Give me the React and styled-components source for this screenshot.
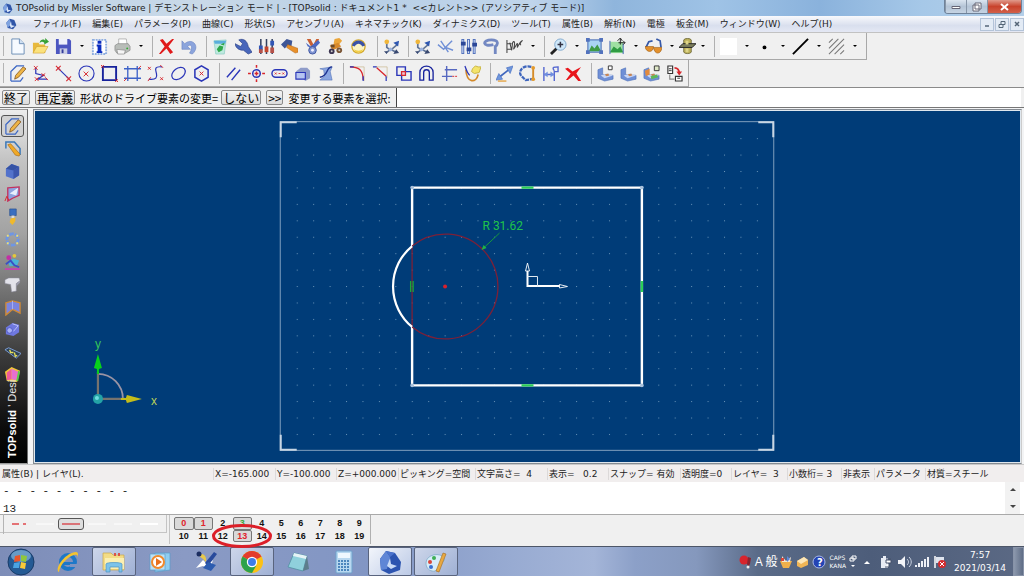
import React from "react";
import styled, { createGlobalStyle, css } from "styled-components";

const ui = '"DejaVu Sans", "Noto Sans CJK JP", sans-serif';
const jp = '"Noto Sans CJK JP", sans-serif';

const Global = createGlobalStyle`
  *, *::before, *::after { box-sizing: border-box; }
  body { margin: 0; background: #f0f0f0; color: #222; font: 9px/12px ${ui}; }
  button, input { font: inherit; color: inherit; margin: 0; padding: 0; border-radius: 0; }
  svg { display: block; }
`;

/* ---------- frame ---------- */
const Shell = styled.div`
  display: flex;
  flex-direction: column;
  height: 100vh;
  overflow: hidden;
`;

const TitleBar = styled.header`
  display: flex;
  flex: 0 0 16px;
  align-items: center;
  gap: 3px;
  padding-left: 2px;
  white-space: pre;
  background: linear-gradient(90deg, #bed3e8 0%, #c9d9e8 20%, #b8cfe6 35%, #c0d5eb 52%, #8fb5dc 60%, #9fc3e6 70%, #8ab2dc 80%, #a6c8e8 90%, #b4cfe9 100%);
`;
const TitleText = styled.h1`
  flex: 1;
  margin: 0;
  font: inherit;
`;
const WindowButtons = styled.div`
  display: flex;
  align-self: flex-start;
  height: 14px;
  margin-right: 2px;
  border: 1px solid #6f8299;
  border-top: 0;
  border-radius: 0 0 4px 4px;
  overflow: hidden;
`;
const WindowButton = styled.button`
  display: grid;
  place-items: center;
  width: ${(p) => (p.$close ? 34 : 21)}px;
  border: 0;
  border-left: 1px solid #8796a8;
  background: ${(p) =>
    p.$close
      ? "linear-gradient(#e09a8c, #c8422c 50%, #d2604a)"
      : "linear-gradient(#dbe5f0, #b4c4d6 50%, #c6d4e3)"};
`;

const MenuBar = styled.nav`
  display: flex;
  flex: 0 0 16px;
  align-items: center;
  gap: 11px;
  padding-left: 5px;
  background: linear-gradient(#f8f9fc, #d9dfee 60%, #e4e8f4);
`;
const MenuIcon = styled.span`
  width: 17px;
`;
const MenuItem = styled.button`
  border: 0;
  background: none;
  white-space: nowrap;
`;
const ChildButtons = styled.div`
  display: flex;
  gap: 1px;
  margin-left: auto;
`;
const ChildButton = styled.button`
  display: grid;
  place-items: center;
  width: 14px;
  height: 13px;
  border: 1px solid #b3c3d8;
  background: #e3ebf5;
`;

/* ---------- toolbars ---------- */
const Toolbar = styled.div`
  display: flex;
  align-items: center;
  height: 27px;
  padding: 0 ${(p) => p.$end}px 0 3px;
  border-right: 1px solid #a8a8a8;
  border-bottom: 1px solid #a8a8a8;
`;
const ToolbarLine = styled.div`
  display: flex;
  flex: none;
  border-top: ${(p) => (p.$rule ? "1px solid #c2c2c2" : "0")};
`;
const Grip = styled.span`
  width: 1px;
  height: 20px;
  margin-right: 2px;
  background: #b4b4b4;
`;
const Divider = styled.span`
  width: 1px;
  height: 21px;
  margin: 0 2px 0 ${(p) => p.$before}px;
  background: #b0b0b0;
`;
const Tool = styled.button`
  display: grid;
  place-items: center;
  width: ${(p) => p.$w || 23}px;
  height: 22px;
  border: 0;
  background: none;
`;
const Caret = styled.button`
  display: grid;
  place-items: center;
  width: 13px;
  height: 22px;
  border: 0;
  background: none;
  &::before {
    content: "";
    border: 2px solid transparent;
    border-top-color: #000;
    border-bottom: 0;
  }
`;

/* ---------- prompt ---------- */
const Prompt = styled.form`
  display: flex;
  flex: 0 0 21px;
  align-items: center;
  padding: 0 3px 0 2px;
  border-top: 1px solid #8a8a8a;
  border-bottom: 1px solid #777;
  font: 11px/14px ${jp};
  color: #000;
  white-space: nowrap;
`;
const PromptButton = styled.button`
  height: 15px;
  padding: 0 1px;
  margin-right: ${(p) => p.$after}px;
  border: 1px solid #8b8b8b;
  border-radius: 2px;
  background: linear-gradient(#f4f4f4, #dcdcdc);
  font-size: 12px;
  line-height: 12px;
`;
const PromptText = styled.span`
  margin-right: 3px;
`;
const PromptInput = styled.input`
  flex: 1;
  min-width: 0;
  height: 19px;
  margin-left: 5px;
  border: 0;
  border-left: 1px solid #444;
  background: #fff;
  outline: none;
`;

/* ---------- workspace ---------- */
const Workspace = styled.main`
  display: flex;
  flex: 1;
  min-height: 0;
  padding: 1px 2px 0 0;
  gap: 5px;
  background: #f3f4f5;
`;
const SideBar = styled.aside`
  display: flex;
  flex: 0 0 28px;
  flex-direction: column;
  border-right: 1px solid #6e6e6e;
  border-top: 1px solid #999;
  border-bottom: 1px solid #999;
  background: linear-gradient(#ececec 0%, #c4c4c4 14%, #a2a2a2 35%, #6e6e6e 53%, #3a3a3a 70%, #0c0c0c 90%, #000 100%);
`;
const SideTools = styled.div`
  display: flex;
  flex: 0 0 276px;
  flex-direction: column;
  justify-content: space-between;
  padding: 5px 3px 0 1px;
`;
const SideTool = styled.button`
  display: grid;
  place-items: center;
  height: 22px;
  border: 1px solid ${(p) => (p.$on ? "#555" : "transparent")};
  border-radius: 3px;
  background: ${(p) => (p.$on ? "#d2d2d2" : "none")};
`;
const Brand = styled.div`
  flex: 1;
  min-height: 0;
  padding-top: 5px;
  margin-left: 4px;
  writing-mode: vertical-rl;
  transform: rotate(180deg);
  white-space: nowrap;
  font: 11px/16px "Liberation Sans", sans-serif;
  color: #e8e8e8;
  b { color: #fff; }
`;
const Viewport = styled.section`
  flex: 1;
  min-width: 0;
  padding: 1px;
  border: 1px solid #858b92;
  border-right-color: #ccc;
  background: #dfe7ee;
  svg { width: 100%; height: 100%; background: #003c78; }
`;

/* ---------- status and console ---------- */
const StatusBar = styled.footer`
  display: grid;
  flex: 0 0 18px;
  grid-template-columns: 213fr 62fr 61fr 62fr 77fr 72fr 61fr 72fr 51fr 56fr 54fr 33fr 51fr 99fr;
  align-items: center;
  border-top: 1px solid #c9c9c9;
  background: #f1eeee;
  white-space: pre;
`;
const StatusCell = styled.span`
  min-width: 0;
  padding-left: 1px;
  border-left: 1px solid ${(p) => (p.$first ? "transparent" : "#dcd9d9")};
`;
const Console = styled.section`
  display: flex;
  flex: 0 0 33px;
  min-height: 0;
  overflow: hidden;
  padding-left: 1px;
  border-bottom: 1px solid #a9a9a9;
  background: #fff;
`;
const ConsoleText = styled.pre`
  flex: 1;
  margin: 0;
  padding-left: 2px;
  overflow: hidden;
  font: 11px/18px "Liberation Mono", monospace;
`;
const ScrollBar = styled.div`
  display: flex;
  flex-direction: column;
  justify-content: space-between;
  width: 15px;
  height: 32px;
  margin-right: 4px;
  background: #f2f2f2;
`;
const ScrollButton = styled.button`
  display: grid;
  place-items: center;
  height: 15px;
  border: 0;
  background: none;
  &::before {
    content: "";
    border: 3px solid transparent;
    ${(p) =>
      p.$up
        ? css`border-bottom-color: #444; border-top: 0;`
        : css`border-top-color: #444; border-bottom: 0;`}
  }
`;

/* ---------- line styles and layers ---------- */
const BottomBars = styled.div`
  display: flex;
  flex: 0 0 31px;
  align-items: flex-start;
`;
const LineStyles = styled.div`
  display: flex;
  flex: 0 0 167px;
  align-items: center;
  height: 18px;
  padding-left: 3px;
  border-right: 1px solid #c4c4c4;
  border-bottom: 1px solid #c4c4c4;
`;
const LineStyle = styled.button`
  display: grid;
  place-items: center;
  width: 26px;
  height: 12px;
  border: 1px solid ${(p) => (p.$on ? "#555" : "transparent")};
  border-radius: 3px;
  background: ${(p) => (p.$on ? "#dedede" : "none")};
`;
const Layers = styled.div`
  position: relative;
  display: grid;
  grid-template-columns: repeat(10, 1fr);
  flex: 0 0 202px;
  height: 29px;
  padding: 2px 1px 2px 4px;
  margin-left: 2px;
  border-left: 1px solid #c4c4c4;
  border-right: 1px solid #b0b0b0;
`;
const Layer = styled.button`
  border: 1px solid ${(p) => (p.$on ? "#777" : "transparent")};
  border-radius: 2px;
  background: ${(p) => (p.$on ? "#d9d9d9" : "none")};
  color: ${(p) => p.$color || "#111"};
  font: bold 9px/10px "Liberation Sans", sans-serif;
`;
const Marker = styled.svg`
  position: absolute;
  left: 41px;
  top: 9px;
  z-index: 1;
  pointer-events: none;
`;

/* ---------- taskbar ---------- */
const Taskbar = styled.footer`
  display: flex;
  flex: 0 0 30px;
  align-items: center;
  border-top: 1px solid #4d5668;
  background: linear-gradient(90deg, #7d8db8 0%, #8a9ac4 18%, #8296c4 36%, #98abd2 50%, #a4b5d8 58%, #8ca0c8 62%, #8598bd 68%, #5a6b88 74%, #4d5d7a 85%, #5b6984 100%);
  color: #fff;
`;
const StartButton = styled.button`
  display: grid;
  place-items: center;
  width: 41px;
  margin-right: 5px;
  border: 0;
  background: none;
`;
const Pinned = styled.div`
  display: flex;
  gap: 2px;
`;
const Task = styled.button`
  display: grid;
  place-items: center;
  width: 44px;
  height: 29px;
  border: 1px solid ${(p) => (p.$open ? "#59647e" : "transparent")};
  border-radius: 2px;
  background: ${(p) =>
    p.$active
      ? "linear-gradient(135deg, #f2f5fb, #bccae6)"
      : p.$open
      ? "linear-gradient(135deg, #cdd6ea, #9fb0d4)"
      : "none"};
`;
const Tray = styled.div`
  display: flex;
  align-items: center;
  gap: 3px;
  margin-left: auto;
`;
const ImeText = styled.span`
  margin-right: -1px;
  font: 12px/14px "Liberation Sans", ${jp};
  white-space: nowrap;
`;
const Keys = styled.span`
  font: 6px/8px ${ui};
`;
const Clock = styled.time`
  width: 60px;
  text-align: center;
  line-height: 13px;
`;
const ShowDesktop = styled.button`
  width: 11px;
  height: 29px;
  border: 1px solid #8893a8;
  background: linear-gradient(90deg, #8c98ad, #5f6d86);
`;

/* ---------- icons, each on an 18 x 18 field ---------- */
const B = "#2a35b8";
const R = "#d8262c";
const O = "#e39a2d";
const S = "#6f8fd6";

const art = {
  app: <><path d="M2 7 7 1l7 2 3 8-5 6-8-2z" fill="#2f55a8" /><path d="M2 7 7 1l2 8-5 6z" fill="#7ea2e0" /><path d="m9 5 1 6 5 1-6 3-2-4z" fill="#dbe8fb" /></>,
  page: <><path d="M3 1h8l5 5v11H3z" fill="#f6faff" stroke="#6b8db5" /><path d="M11 1v5h5" fill="#cfe0f3" stroke="#6b8db5" /></>,
  open: <><path d="M1 5h6l1 2h6v9H1z" fill="#e8b93c" /><path d="m1 16 4-7h12l-4 7z" fill="#fbe27c" stroke="#cf9c2a" strokeWidth=".6" /><path d="M8 5c1-4 5-4 6-2V0l4 4-5 3V5c-2-2-3-1-5 0z" fill="#37a036" /></>,
  save: <><path d="M1 1h14l2 2v14H1z" fill="#4c56c0" /><path d="M4 1h9v6H4z" fill="#eef1fb" /><path d="M5 11h8v6H5z" fill="#c9cde4" /><path d="M7 12h2v4H7z" fill="#333c9a" /></>,
  info: <><path d="M2 2h14v15H2z" fill="#fff" stroke="#8faee0" strokeWidth="2" strokeDasharray="2 1" /><path d="M7 3h4v3H7zM6 7h5v7h1v2H6v-2h1V9H6z" fill="#0b2cc0" /></>,
  print: <><path d="M5 1h8l1 7H5z" fill="#fff" stroke="#999" strokeWidth=".7" /><path d="m1 8 3-2h11l2 3v4l-5 3H3l-2-3z" fill="#b9bdb9" stroke="#777" strokeWidth=".6" /><path d="m3 12 9 1-1 4H4z" fill="#f4f4f4" stroke="#777" strokeWidth=".6" /><circle cx="14" cy="11" r="1" fill="#3a3" /></>,
  del: <path d="m2 2 3-1 4 5 6-5h2l-6 8 5 6-3 2-4-6-6 6H1l6-8z" fill="#e0191a" />,
  undo: <path d="M1 3v9h9L7 9c4-4 6 1 2 7l3 1C21 9 12-1 4 6z" fill="#8ba4dc" stroke="#6580c0" strokeWidth=".6" />,
  recycle: <><path d="m2 3 13-1-2 15H4z" fill="#bfeadf" stroke="#7dc4bc" strokeWidth=".6" /><path d="M2 3h13l-1 3H3z" fill="#5aaedc" /><path d="m5 12 3-4 4 1-1 4-4 2zM9 7l4-2v3z" fill="#2fa84a" /></>,
  wrench: <path d="M0 6c1 6 6 7 9 7l5 4 4-2-4-6C13 3 9 0 4 2l4 4-2 3z" fill="#4866bb" stroke="#2b3f85" strokeWidth=".7" />,
  sliders: <><path d="M3 1v16M9 1v16M15 1v16" stroke="#33405f" strokeWidth="1.6" /><path d="M1 8h4v5H1zM13 3h4v5h-4z" fill="#3156b5" /><path d="M7 9h4v6H7z" fill="#c2452d" /><path d="M1 12h4v4H1zM13 10h4v6h-4z" fill="#b5524a" /></>,
  hammer: <><path d="m0 7 6-6 6 2-1 6-4-1-3 3z" fill="#3f5696" /><path d="m7 7 11 4v4l-3 1-9-6z" fill="#e8902a" stroke="#a95f15" strokeWidth=".5" /></>,
  medal: <><path d="m3 1 4 0 3 6 3-6h3l-4 9H8z" fill="#c96033" /><path d="m2 5 5 4 8-7 2 3-6 6-7-2z" fill="#4a68c4" /><circle cx="9" cy="13" r="4" fill="#8095d2" stroke="#3e54a0" /><circle cx="9" cy="13" r="1.5" fill="#eef" /></>,
  robot: <><path d="m8 1 5-1 3 3-4 5-5-2z" fill="#eba53a" /><path d="m3 8 9-3 3 4-9 4z" fill="#d8892b" /><path d="M4 7h4v3H4z" fill="#6a4a2a" /><circle cx="5" cy="14" r="3" fill="#3b3450" /><circle cx="13" cy="13" r="3" fill="#7a5535" /><circle cx="5" cy="14" r="1" fill="#ccc" /><circle cx="13" cy="13" r="1" fill="#ccc" /></>,
  gauge: <><circle cx="9" cy="9" r="7" fill="#fbf3c4" stroke="#d2a82c" strokeWidth="1.4" /><path d="M2 8c2-7 12-7 14 0l-3 1c-2-4-6-4-8 0z" fill="#3a52a8" /><path d="M4 12c3 2 7 2 10 0l-2 3H6z" fill="#f3cf48" /></>,
  axes: <><path d="M4 3v7l4 3 7-6M8 12l-5 4M8 12l6 3" fill="none" stroke="#5f7396" strokeWidth="1.8" /><circle cx="4" cy="4" r="2.5" fill="#f0b63a" /><path d="m17 3-1 6-5-4z" fill="#2e57b0" /><circle cx="8" cy="12" r="2" fill="#9cb2dd" /><path d="m1 14 4 0-1 3zM14 12l3 4-6 1z" fill="#384870" /></>,
  check: <path d="M1 7 7 12 16 3M4 3l8 12M9 10l8 3" fill="none" stroke="#6f8fd6" strokeWidth="1.5" />,
  bars: <><path d="M3 1v16M9 1v16M15 1v16" stroke="#4c6cba" strokeWidth="3" /><path d="M3 2v14M9 2v14M15 2v14" stroke="#dbe5fa" /><path d="M1 4h5v4H1zM7 10h5v4H7zM13 5h5v4h-5z" fill="#2b4797" /></>,
  loop: <path d="M11 7c-12 3-12-5-2-5 8 0 7 5 4 7v8" fill="none" stroke="#7388c2" strokeWidth="3" />,
  scribble: <path d="M1 2v14M1 6h5M1 12h5M4 5l2 8 1-8c2-3 3 0 1 7 5-8 4-8 4-2 3-6 4-7 5-7-2 2-3 5-1 4" fill="none" stroke="#444" strokeWidth="1.1" />,
  zoom: <><path d="m1 17 6-6" stroke="#222" strokeWidth="3" /><circle cx="11" cy="7" r="6" fill="#cfe8fa" stroke="#7ea7cc" /><path d="M8 7h6M11 4v6" stroke="#334" strokeWidth="1.6" /></>,
  fit: <><path d="M2 2h14v13H2z" fill="#a9d4f3" stroke="#3b62b0" /><path d="m3 14 3-6 3 3 3-4 4 7z" fill="#3f9b45" /><path d="M0 0h4v4H0zM14 0h4v4h-4zM0 13h4v4H0zM14 13h4v4h-4z" fill="#5272bd" /></>,
  view: <><path d="M1 4h14v12H1z" fill="#9fe0a2" /><path d="m1 15 4-6 4 3 3-3 3 6z" fill="#2f9b42" /><path d="M1 3v14M15 6v11" stroke="#3b62b0" /><path d="M9 3 12 0l2 3M12 1v6M10 5h7l-2-2m2 2-2 2" fill="none" stroke="#222" /></>,
  glasses: <><path d="M1 10 4 4l4-1M12 1l4 2 1 7" fill="none" stroke="#3558a8" strokeWidth="1.8" /><path d="M0 9h9c0 7-8 7-9 0zM9 10h9c-1 8-8 8-9 0z" fill="#e3902c" stroke="#9a5b12" strokeWidth=".6" /></>,
  section: <><path d="M5 2c1-2 7-2 8 0v13c-1 2-7 2-8 0z" fill="#bdb15a" stroke="#5f5a2c" strokeWidth=".8" /><path d="m0 10 4-4h14l-4 4z" fill="#7b7d5c" stroke="#222" /><path d="M7 3h3v4H7zM7 11h3v4H7z" fill="#ded589" /></>,
  white: <path d="M0 0h18v18H0z" fill="#fff" />,
  dot: <circle cx="9" cy="10" r="2" fill="#000" />,
  line: <path d="M1 17 17 1" stroke="#000" strokeWidth="2" />,
  hatch: <path d="m1 5 4-4M1 11 11 1M1 17 17 1M7 17 17 7M13 17l4-4" stroke="#777" strokeWidth="1.1" />,

  sketch: <><path d="M2 17V7l6-6h8M2 17h10l3-4" fill="none" stroke="#3d67c4" strokeWidth="1.3" /><path d="m6 15 1-4 8-9 3 2-8 9z" fill="#efb545" stroke="#7a4c17" strokeWidth=".8" /></>,
  polyline: <><path d="M4 3v6l8 2-6 4h10" fill="none" stroke={B} strokeWidth="1.3" /><path d="m2 1 4 4m0-4L2 5M10 9l4 3m0-3-4 3M3 13l4 4m0-4-4 4M14 13l3 3" stroke={R} /></>,
  segment: <><path d="m3 3 12 12" stroke={B} strokeWidth="1.2" /><path d="m1 1 5 5m0-5L1 6M12 12l5 5m0-5-5 5" fill="none" stroke={R} strokeWidth="1.1" /></>,
  circle: <><circle cx="9" cy="9" r="8" fill="none" stroke={B} strokeWidth="1.2" /><path d="m6 7 5 5m0-5-5 5" stroke={R} /></>,
  rect: <><path d="M2 2h14v14H2z" fill="none" stroke="#17229c" strokeWidth="2" /><path d="m0 0 3 3m0-3L0 3M15 15l3 3m0-3-3 3" stroke={R} /></>,
  frame: <><path d="M4 1v16M14 1v16M0 4h18M0 14h18" stroke="#3d62c8" strokeWidth="1.4" /><path d="m0 17 3-3M15 4l3-3" stroke={R} /></>,
  spline: <><path d="M16 2C7 1 9 5 10 9s0 7-8 6" fill="none" stroke={B} strokeWidth="1.3" /><path d="m1 2 3 3m0-3L1 5M14 0l3 3M4 13l-3 4M14 13l3 3m0-3-3 3" stroke={R} /></>,
  ellipse: <ellipse cx="9" cy="9" rx="8" ry="5.5" fill="none" stroke={B} strokeWidth="1.3" transform="rotate(-38 9 9)" />,
  hexagon: <><path d="m9 1 7 4v8l-7 4-7-4V5z" fill="none" stroke={B} strokeWidth="1.6" /><path d="m7 7 4 4m0-4-4 4" stroke={R} /></>,
  parallel: <path d="m2 13 9-10M7 16 16 5" stroke={B} strokeWidth="1.5" />,
  target: <><circle cx="9" cy="9" r="4" fill="none" stroke={B} strokeWidth="1.6" /><path d="M9 0v3M9 15v3M0 9h3M15 9h3M9 7v4M7 9h4" stroke={R} strokeWidth="1.6" /></>,
  slot: <><rect x="1" y="5" width="16" height="8" rx="4" fill="none" stroke={B} strokeWidth="1.5" /><path d="m4 8 2 2m0-2-2 2M12 8l2 2m0-2-2 2M8 9h2" stroke={R} strokeWidth=".9" /></>,
  face: <><path d="m2 7 5-4h7l3 3v8l-5 3" fill="#8f9cc9" /><path d="M2 8h10v7H2z" fill="#b5c4f2" stroke={B} strokeWidth="1.2" /></>,
  wave: <><path d="m3 4 13-2-2 5 2 9H3l5-4-1-7z" fill="#8aa6e2" stroke="#5270b5" strokeWidth=".6" /><path d="M16 2c-7 0-3 9-13 11" fill="none" stroke="#1d3290" strokeWidth="1.5" /></>,
  fillet: <><path d="M1 2h15v15" fill="none" stroke="#c9b48a" strokeWidth=".7" /><path d="M1 2c9 0 14 3 14 14" fill="none" stroke={R} strokeWidth="1.4" /><path d="M1 2h4M15 12v5" stroke={B} strokeWidth="1.3" /></>,
  chamfer: <><path d="M4 2h12v12" fill="none" stroke="#c9b48a" strokeWidth=".7" /><path d="m5 3 10 9" stroke={R} strokeWidth="1.4" /><path d="M1 2h4M15 12v5" stroke={B} strokeWidth="1.3" /></>,
  boolean: <><path d="M2 2h9v9H2zM7 7h10v9H7z" fill="none" stroke={B} strokeWidth="1.5" /><path d="M7 7h4v4H7z" fill="#f3c4ce" stroke={R} strokeWidth="1.2" /></>,
  offset: <path d="M2 16V8c0-9 14-9 14 0v8h-4V8c0-4-6-4-6 0v8z" fill="none" stroke="#17229c" strokeWidth="1.4" />,
  trim: <><path d="M6 1v16M4 5h13M1 12h11" stroke="#5668c0" strokeWidth="1.5" /><path d="M12 12h6" stroke={R} strokeDasharray="2 1" /></>,
  tangent: <><path d="M2 5c1 15 11 14 13 5" fill="none" stroke="#d48a2a" strokeWidth="1.8" /><path d="M1 1c1 3 2 7 5 10" fill="none" stroke={B} strokeWidth="1.3" /><path d="m9 4 3-3 3 1h3l-2 6-5 1-3-2z" fill="#f4e46c" stroke="#c8b440" strokeWidth="1" /></>,
  measure: <><path d="M2 14 16 3" stroke="#3f66bd" strokeWidth="1.8" /><path d="m0 16 3-7 4 6zM18 1l-7 2 4 6z" fill="#6f97dc" stroke="#3f66bd" strokeWidth=".6" /><path d="M2 17h9" stroke={O} strokeWidth="1.3" /></>,
  constraint: <><path d="M13 2C4-1-3 8 4 13l3 3 7-1" fill="none" stroke="#3f66bd" strokeWidth="2.4" strokeDasharray="4 1" /><path d="M15 3v12" stroke="#d48a2a" strokeWidth="2" /><circle cx="15" cy="3" r="2" fill={O} /><circle cx="15" cy="15" r="2" fill={O} /></>,
  dimension: <><path d="M2 2v15M13 6v11M2 10h11M13 6c-3-4 0-4 4-4v5h-4" fill="none" stroke="#5668d0" strokeWidth="1.5" /><path d="m2 10 4-3v6zM13 10 9 7v6z" fill="#6f8fe0" /></>,
  erase: <path d="m0 4 3-1 5 4 9-5-5 7 5 8-3 0-5-6-6 5H1l5-7z" fill="#e8151b" />,
  block: <><path d="m1 5 5-2v7l11 1v4l-9 2-7-3z" fill={S} stroke="#4b6db6" strokeWidth=".6" /><path d="m4 11 6-2 7 2-9 3z" fill="#c7d5f4" /><path d="m8 10 4-1 1 2-3 1z" fill="#c58453" /></>,
  dirs: <><path d="M2 1h5v8H2zM10 12h7v5h-7z" fill="#fff" stroke="#333" strokeWidth="1.2" /><path d="M3 4h3M3 6h3M12 14h3" stroke="#333" /><path d="M9 3c4 0 5 2 5 6" fill="none" stroke={R} strokeWidth="1.8" /><path d="m11 7 6 0-3 4z" fill={R} /><path d="M4 10v5h5" fill="none" stroke="#888" strokeWidth="1.2" /></>,

  sideEdit: <><path d="M2 9V2h9l6 7v7" fill="none" stroke="#3b78b8" strokeWidth="1.6" /><path d="m4 5 3-1 10 11-1 2-4-1z" fill="#f0a927" stroke="#a96a12" strokeWidth=".7" /></>,
  box: <><path d="m2 6 6-5 8 3v9l-6 4-8-3z" fill="#5372cb" /><path d="m2 6 6-5 8 3-6 4z" fill="#3553a5" /><path d="m10 8 6-4v9l-6 4z" fill="#3c56ad" /></>,
  solid: <><path d="m4 3 12-1v9l-7 3-5 3z" fill="#8da3df" stroke="#c4305e" strokeWidth="1.4" /><path d="m6 9 9-6-2 8z" fill="#e8eefc" /><path d="m1 17 2-5 2 4" fill="none" stroke={R} /></>,
  screw: <><path d="M6 1h7v7H6z" fill="#3a6fc0" stroke="#244a8a" strokeWidth=".6" /><path d="M8 8h3v3H8z" fill="#ddd" /><path d="m7 11 5-1v4l-3 4-3-3z" fill="#f0b92c" /></>,
  ring: <><circle cx="9" cy="9" r="6" fill="none" stroke="#6f96e4" strokeWidth="3" strokeDasharray="5 1" /><path d="M3 5h2M13 5h2M3 13h2M13 13h2" stroke="#f0e070" strokeWidth="2" /></>,
  parts: <><circle cx="5" cy="5" r="2.5" fill="#c42fa5" /><circle cx="11" cy="3" r="2" fill="#e6c739" /><path d="m4 9 6-3 6 2-2 5-8 1z" fill="#4bb4d8" /><path d="m2 12 5-4 4 5 5 2" stroke="#3c4fc4" strokeWidth="2" fill="none" /><path d="M1 17h16" stroke="#d338b8" strokeWidth="1.6" /></>,
  machine: <><path d="m1 4 4-2h11l1 3-4 3v8l-5 1-1-8-6-1z" fill="#e3e3ea" stroke="#8b8b98" strokeWidth=".6" /><path d="m13 8 4-3v2l-4 4z" fill="#9a9aaa" /></>,
  fold: <><path d="m2 4 7-2 8 2v11l-8-4-7 6z" fill="#7a84e0" stroke="#d08a34" strokeWidth="1.4" /><path d="M9 2v9" stroke="#aab0f2" /></>,
  pipe: <><path d="m2 7 7-5 7 2v8l-6 4-8-2z" fill="#6f78e0" /><circle cx="6" cy="10" r="3" fill="#a9b1f6" stroke="#4d57c4" /><path d="m9 3 6 2-5 6" fill="none" stroke="#bcc3fb" /></>,
  plate: <><path d="m1 6 4-2 13 6-5 5z" fill="#2f4255" stroke="#7fa2dc" /><path d="m6 6 1 3 3 0M11 9l1 4 2-1" fill="none" stroke="#e7df5a" strokeWidth="1.4" /></>,
  color: <><path d="m1 6 7-5 9 4-3 12-11-1z" fill="#f0c53a" /><path d="m3 7 5-4v11l-5 1z" fill="#ef5a9a" /><path d="m8 3 7 3-2 9-5-1z" fill="#e86fd0" /><path d="m15 5 2 1-2 10-2 0z" fill="#5ac84e" /></>,
};

const Glyph = ({ name, size = 18, extra }) => (
  <svg width={size} height={size} viewBox="0 0 18 18" aria-hidden="true">
    {art[name]}
    {extra}
  </svg>
);

/* Each entry: "|n" is a divider, "v" a drop-down arrow, else an icon. */
const topTools = [
  ["page", "新規"], ["open", "開く"], ["save", "保存"], ["v", "保存の種類"], ["info", "情報"], ["print", "印刷"], ["v", "印刷の種類"], ["|5"],
  ["del", "削除"], ["undo", "元に戻す"], ["|5"],
  ["recycle", "ごみ箱"], ["wrench", "修正"], ["sliders", "パラメータ"], ["hammer", "ツール"], ["medal", "拘束"], ["robot", "移動"], ["gauge", "解析"], ["|7"],
  ["axes", "座標系"], ["|5"],
  ["axes", "カレント座標系"], ["check", "点"], ["bars", "属性"], ["loop", "回転"], ["scribble", "注記"], ["v", "注記の種類"], ["|5"],
  ["zoom", "ズーム"], ["v", "ズームの種類"], ["fit", "全体表示"], ["view", "ビュー"], ["v", "ビューの種類"], ["glasses", "表示"], ["v", "表示の種類"], ["section", "断面", 18], ["v", "断面の種類"], ["|5"],
  ["white", "色"], ["v", "色の選択"], ["dot", "点の種類"], ["v", "点の選択"], ["line", "線の種類"], ["v", "線の選択"], ["hatch", "ハッチング"], ["v", "ハッチングの選択"],
];
const sketchTools = [
  ["sketch", "スケッチ"], ["polyline", "輪郭"], ["segment", "直線"], ["circle", "円"], ["rect", "四角形"], ["frame", "枠"], ["spline", "スプライン"], ["ellipse", "楕円"], ["hexagon", "多角形"], ["|6"],
  ["parallel", "平行線"], ["target", "中心"], ["slot", "長穴"], ["face", "面"], ["wave", "投影"], ["|6"],
  ["fillet", "フィレット"], ["chamfer", "面取り"], ["boolean", "ブーリアン"], ["offset", "オフセット"], ["trim", "トリム"], ["tangent", "接線"], ["|6"],
  ["measure", "寸法"], ["constraint", "拘束"], ["dimension", "寸法線"], ["erase", "削除"], ["|6"],
  ["block", "ブロック", 23, <path key="a" d="M12 1h4v4h-4z" fill="#fff" stroke="#333" />],
  ["block", "ブロック挿入"],
  ["block", "ブロック編集", 23, <g key="b"><path d="m2 6 5-2v6l-4 2z" fill="#e28a3c" /><path d="m8 12 7-2 1 3-7 2z" fill="#5cb85a" /><path d="M12 1h5v5h-5z" fill="#dfe8c8" stroke="#333" /></g>],
  ["dirs", "置換"],
];
const ToolItems = ({ items }) =>
  items.map(([name, label, w, extra], i) =>
    name[0] === "|" ? (
      <Divider key={i} $before={Number(name[1])} />
    ) : name === "v" ? (
      <Caret key={i} type="button" aria-label={label} />
    ) : (
      <Tool key={i} type="button" $w={w} aria-label={label}>
        <Glyph name={name} size={17} extra={extra} />
      </Tool>
    )
  );

const menus = ["ファイル(F)", "編集(E)", "パラメータ(P)", "曲線(C)", "形状(S)", "アセンブリ(A)", "キネマチック(K)", "ダイナミクス(D)", "ツール(T)", "属性(B)", "解析(N)", "電極", "板金(M)", "ウィンドウ(W)", "ヘルプ(H)"];
const sideTools = [["sketch", "スケッチ"], ["sideEdit", "曲線"], ["box", "形状"], ["solid", "サーフェス"], ["screw", "標準部品"], ["ring", "アセンブリ"], ["parts", "部品"], ["machine", "工具"], ["fold", "板金"], ["pipe", "配管"], ["plate", "プレート"], ["color", "レンダリング"]];
const status = ["属性(B) | レイヤ(L).", "X=-165.000", "Y=-100.000", "Z=+000.000", "ピッキング=空間", "文字高さ=  4", "表示=   0.2", "スナップ= 有効", "透明度=0", "レイヤ=  3", "小数桁= 3", "非表示", "パラメータ", "材質=スチール"];
const layerColors = { 0: "#e0242c", 1: "#e0242c", 3: "#3fa63f", 13: "#e0242c" };

const Drawing = () => (
  <svg viewBox="35 111 986 351" role="img" aria-label="図面">
    <defs>
      <pattern id="grid" x="297" y="138" width="16.45" height="16.45" patternUnits="userSpaceOnUse">
        <rect width="1" height="1" fill="#6a94b8" />
      </pattern>
    </defs>
    <rect x="296" y="137" width="464" height="299" fill="url(#grid)" />
    <rect x="280.5" y="121.5" width="494" height="329" fill="none" stroke="#7f9fbe" />
    <path d="M281 137v-15h16M759 122h15v15M774 435v15h-15M297 450h-16v-15" fill="none" stroke="#c8d6e4" strokeWidth="2" />
    <path d="M412.500 246V187.500h230v198h-230V327" fill="none" stroke="#fff" strokeWidth="2.4" />
    <path d="M412.500 246v81" stroke="#7c2038" strokeWidth="1.3" />
    <path d="M412.500 246a52.500 52.500 0 1 1 0 81" fill="none" stroke="#7c2038" strokeWidth="1.3" />
    <path d="M412.500 246a52.500 52.500 0 0 0 0 81" fill="none" stroke="#fff" strokeWidth="2.2" />
    <circle cx="445.5" cy="286.5" r="2" fill="#d8202c" />
    <path d="M411 281v11M413.500 281v11" stroke="#17a83c" strokeWidth="1.3" />
    <path d="M522 187.500h12M522 385.500h12M642.500 281v11" stroke="#2bcf57" strokeWidth="2.4" />
    <g fill="#a9c1dc">
      <circle cx="412.5" cy="187.5" r="1.8" /><circle cx="642.5" cy="187.5" r="1.8" />
      <circle cx="412.5" cy="385.5" r="1.8" /><circle cx="642.5" cy="385.5" r="1.8" />
    </g>
    <path d="M528 270v16h33" fill="none" stroke="#fff" strokeWidth="2" />
    <path d="M528 276.500h10v10" fill="none" stroke="#dfe8f0" />
    <path d="m526 271 2-8 2 8zM560 284.500l8 2-8 1.500z" fill="#003c78" stroke="#fff" strokeWidth=".9" />
    <text x="483" y="230" fill="#1fc44a" fontFamily="Roboto, sans-serif" fontSize="12">R 31.62</text>
    <path d="m484 248 16-15" fill="none" stroke="#159a3c" />
    <path d="m482 250 2-5 3 3z" fill="#1fb447" />
    <path d="M98 374a25 25 0 0 1 25 25" fill="none" stroke="#9a94a4" strokeWidth="1.8" />
    <path d="M98 399v-27M98 399h27" stroke="#77736e" strokeWidth="2.2" />
    <path d="m94 368 4-14 4 14-3 1v5h-2v-5z" fill="#08d21c" />
    <path d="m127 395 15 4-15 4-1-3h-5v-2h5z" fill="#c4bd1a" />
    <circle cx="98" cy="399" r="5" fill="#24a3a6" /><circle cx="97" cy="398" r="2" fill="#6fdde0" />
    <text x="95" y="348" fill="#36c25a" fontFamily="Liberation Sans, sans-serif" fontSize="12">y</text>
    <text x="151" y="405" fill="#b9d05a" fontFamily="Liberation Sans, sans-serif" fontSize="12">x</text>
  </svg>
);

const taskArt = {
  ie: <><circle cx="12" cy="12" r="7" fill="none" stroke="#1e78c8" strokeWidth="4" /><path d="M6 12h13v3H6z" fill="#1e78c8" /><path d="M14 14h7v3h-7z" fill="#8094c0" /><path d="M3 22C-2 20 8 3 20 2c3 0 2 4 1 6 1-3 0-4-3-3C11 7 4 15 3 22z" fill="#f4c430" /></>,
  folder: <><path d="M1 3h8l2 2h11v15H1z" fill="#f3dc86" stroke="#c9a74a" strokeWidth=".7" /><path d="M3 8h19v11H3z" fill="#fbefb2" /><path d="M4 22v-8c0-2 16-2 16 0v8h-3v-5H8v5z" fill="#7cc3ea" stroke="#4c93c4" strokeWidth=".7" /><path d="M12 3h2v3h-2zM16 3h2v3h-2z" fill="#d9534a" /></>,
  media: <><path d="M7 3h15v17l-15 2z" fill="#8fcdf0" stroke="#5a9bc8" strokeWidth=".7" /><path d="M2 4h15v16H2z" fill="#b9e0f6" stroke="#5a9bc8" strokeWidth=".7" /><circle cx="10" cy="12" r="7" fill="#f08a2c" /><circle cx="10" cy="12" r="5" fill="#fff" /><path d="m8 8 6 4-6 4z" fill="#e8701c" /></>,
  swan: <><path d="m2 18 7-8 4 4 6-4-3 9-7-3z" fill="#fff" /><path d="M4 5c6-3 9 2 8 7L9 9z" fill="#e8c94a" /><path d="m11 13 9-11 3 2-9 12z" fill="#284a9c" /><path d="m14 12 8 3-5 6-8-3z" fill="#2c5cb0" /><circle cx="5" cy="4" r="2.5" fill="#1b2d60" /></>,
  chrome: <><circle cx="12" cy="12" r="11" fill="#fbc116" /><path d="M12 12 2.500 6.500a11 11 0 0 1 19 0z" fill="#e33b2e" /><path d="M12 12 2.500 6.500A11 11 0 0 0 12 23l4-7z" fill="#2ba24c" /><circle cx="12" cy="12" r="5.2" fill="#fff" /><circle cx="12" cy="12" r="4" fill="#3f7de8" /></>,
  note: <><path d="m8 3 13 3-4 15-15-4z" fill="#8fd0dc" stroke="#4a8d9c" strokeWidth=".7" /><path d="m8 3 13 3-1 3L7 6z" fill="#e6f3f6" /><path d="m21 6 2 13-6 2z" fill="#5d7d8c" /></>,
  calc: <><rect x="4" y="1" width="16" height="22" rx="1" fill="#b8d8f0" stroke="#6ea2cc" /><path d="M6 3h12v5H6z" fill="#eef8ff" /><path d="M6 11h12M6 14h12M6 17h12M6 20h12" stroke="#4c86bd" strokeWidth="2" strokeDasharray="2 1" /></>,
  top: <><path d="M2 9 8 1l9 2 6 9-1 8-11 4-8-4z" fill="#2c54b0" /><path d="m2 9 6-8 4 6-3 12-6 1z" fill="#5f86d6" /><path d="m12 8 1 6 6 2-6 3-4-3z" fill="#c9daf6" /><path d="m8 1 9 2-5 4z" fill="#4a72cc" /></>,
  paint: <><path d="M2 13C2 4 17 2 20 8c2 5-4 3-5 7s-3 7-7 6-6-4-6-8z" fill="#d7ecf8" stroke="#7fa9c8" strokeWidth=".8" /><circle cx="6" cy="12" r="2" fill="#d9453a" /><circle cx="10" cy="8" r="2" fill="#3fae55" /><circle cx="7" cy="17" r="2" fill="#3a6fd0" /><path d="m12 21 7-18 3 1-7 18z" fill="#e8a842" stroke="#a36c1e" strokeWidth=".6" /></>,
};
const TaskIcon = ({ name }) => (
  <svg width="24" height="24" viewBox="0 0 24 24" aria-hidden="true">{taskArt[name]}</svg>
);
const tasks = [["ie", "Internet Explorer"], ["folder", "エクスプローラー", true], ["media", "Media Player"], ["swan", "メール"], ["chrome", "Chrome", true], ["note", "メモ帳"], ["calc", "電卓"], ["top", "TOPsolid", true, true], ["paint", "ペイント", true]];

export default function App() {
  return (
    <Shell>
      <Global />
      <TitleBar>
        <Glyph name="app" size={11} />
        <TitleText>{"TOPsolid by Missler Software | デモンストレーション モード | - [TOPsolid : ドキュメント1 *  <<カレント>> (アソシアティブ モード)]"}</TitleText>
        <WindowButtons>
          <WindowButton aria-label="最小化"><svg width="10" height="6"><path d="M1 2.500h8v2H1z" fill="#fff" stroke="#667" /></svg></WindowButton>
          <WindowButton aria-label="元に戻す"><svg width="10" height="10"><path d="M3 1h6v6H3zM1 3h6v6H1z" fill="#fff" stroke="#667" /></svg></WindowButton>
          <WindowButton $close aria-label="閉じる"><svg width="9" height="8"><path d="m1 1 7 6m0-6L1 7" stroke="#fff" strokeWidth="2" /></svg></WindowButton>
        </WindowButtons>
      </TitleBar>
      <MenuBar>
        <MenuIcon><Glyph name="app" size={12} /></MenuIcon>
        {menus.map((m) => <MenuItem key={m} type="button">{m}</MenuItem>)}
        <ChildButtons>
          <ChildButton aria-label="最小化"><svg width="8" height="8"><path d="M2 6h4" stroke="#567" strokeWidth="1.5" /></svg></ChildButton>
          <ChildButton aria-label="元に戻す"><svg width="8" height="8"><path d="M3 1.500h4v3H3zM1 4.500h4v3H1z" fill="none" stroke="#567" /></svg></ChildButton>
          <ChildButton aria-label="閉じる"><svg width="8" height="8"><path d="m2 2 4 4m0-4L2 6" stroke="#567" strokeWidth="1.5" /></svg></ChildButton>
        </ChildButtons>
      </MenuBar>
      <ToolbarLine $rule>
        <Toolbar $end={5} role="toolbar" aria-label="標準"><Grip /><ToolItems items={topTools} /></Toolbar>
      </ToolbarLine>
      <ToolbarLine>
        <Toolbar $end={2} role="toolbar" aria-label="スケッチ"><Grip /><ToolItems items={sketchTools} /></Toolbar>
      </ToolbarLine>
      <Prompt onSubmit={(e) => e.preventDefault()}>
        <PromptButton type="button" $after={5}>終了</PromptButton>
        <PromptButton type="button" $after={5}>再定義</PromptButton>
        <PromptText>形状のドライブ要素の変更=</PromptText>
        <PromptButton type="button" $after={5}>しない</PromptButton>
        <PromptButton type="button" $after={5}>&gt;&gt;</PromptButton>
        <label htmlFor="target">変更する要素を選択:</label>
        <PromptInput id="target" />
      </Prompt>
      <Workspace>
        <SideBar>
          <SideTools>
            {sideTools.map(([n, label], i) => (
              <SideTool key={n} type="button" $on={i === 0} aria-label={label}><Glyph name={n} size={17} /></SideTool>
            ))}
          </SideTools>
          <Brand><b>TOPsolid</b> ' Desi</Brand>
        </SideBar>
        <Viewport><Drawing /></Viewport>
      </Workspace>
      <StatusBar>
        {status.map((s, i) => <StatusCell key={s} $first={i === 0}>{s}</StatusCell>)}
      </StatusBar>
      <Console>
        <ConsoleText>{"- - - - - - - - - -\n13"}</ConsoleText>
        <ScrollBar><ScrollButton $up aria-label="上へ" /><ScrollButton aria-label="下へ" /></ScrollBar>
      </Console>
      <BottomBars>
        <LineStyles>
          <Grip />
          <LineStyle aria-label="一点鎖線"><svg width="14" height="2"><path d="M0 1h7M11 1h3" stroke="#e0484c" strokeWidth="1.3" /></svg></LineStyle>
          <LineStyle aria-label="破線"><svg width="18" height="2"><path d="M0 1h18" stroke="#fff" /></svg></LineStyle>
          <LineStyle $on aria-label="実線"><svg width="18" height="2"><path d="M0 1h18" stroke="#d83a40" strokeWidth="1.3" /></svg></LineStyle>
          {[1, 1, 2].map((w, i) => (
            <LineStyle key={i} aria-label="太線"><svg width="18" height="2"><path d="M0 1h18" stroke="#fff" strokeWidth={w} /></svg></LineStyle>
          ))}
        </LineStyles>
        <Layers>
          {Array.from({ length: 20 }, (_, n) => (
            <Layer key={n} type="button" $on={n in layerColors} $color={layerColors[n]}>{n}</Layer>
          ))}
          <Marker width="62" height="25" aria-hidden="true"><ellipse cx="31" cy="12" rx="28.5" ry="10.5" fill="none" stroke="#dc1f28" strokeWidth="3" /></Marker>
        </Layers>
      </BottomBars>
      <Taskbar>
        <StartButton aria-label="スタート">
          <svg width="28" height="28" viewBox="0 0 28 28">
            <circle cx="14" cy="14" r="13" fill="#245a94" stroke="#1a3c68" /><ellipse cx="14" cy="8" rx="10" ry="6" fill="#86b6dc" opacity=".7" />
            <path d="m8 8 5-1v6l-6 1z" fill="#e8562c" /><path d="m14 7 6 1-1 6-5-1z" fill="#8fc73c" /><path d="m7 15 6-1-1 6-6 0z" fill="#4aa3e2" /><path d="m14 14 5 1-1 6-5-1z" fill="#f8ca38" />
          </svg>
        </StartButton>
        <Pinned>
          {tasks.map(([n, label, open, active]) => (
            <Task key={n} $open={open} $active={active} aria-label={label}><TaskIcon name={n} /></Task>
          ))}
        </Pinned>
        <Tray>
          <svg width="14" height="14"><circle cx="6" cy="5" r="4.5" fill="#d8242c" /><path d="m10 2 3 1-1 6-2 3-1-3z" fill="#8a2430" /><circle cx="10" cy="12" r="1.5" fill="#eee" /></svg>
          <ImeText>A 般</ImeText>
          <svg width="14" height="14"><path d="M1 6h12l-3 7H4z" fill="#f0b04a" /><path d="m3 1 4 5 5-4-1 5H3z" fill="#f5e6d0" /><path d="m8 1 3 3-3 3z" fill="#5a86d8" /><path d="M2 3h3v3H2z" fill="#d8453a" /></svg>
          <svg width="13" height="14"><path d="m1 6 7-4 4 3v5l-7 3-4-2z" fill="#efb556" /><path d="m1 6 7-4 4 3-7 4z" fill="#fbe6b8" /></svg>
          <svg width="14" height="14"><circle cx="7" cy="7" r="6" fill="#2444b4" stroke="#a9b8e8" /><text x="5" y="11" fill="#fff" fontSize="10" fontWeight="bold">?</text></svg>
          <Keys>CAPS<br />KANA</Keys>
          <svg width="8" height="14"><path d="M3 1h4v3H3zM1 3h4v3H1z" fill="none" stroke="#fff" /><path d="M2 10h4L4 12z" fill="#fff" /></svg>
          <svg width="14" height="14"><path d="m4 9 3-3 3 3z" fill="#fff" /></svg>
          <svg width="16" height="14"><path d="M4 3h7v10H4zM6 1h3v2H6z" fill="#e8ecf4" /><path d="M9 5h5v3H9zM12 8v4H8M10 3v2M13 3v2" stroke="#46526c" fill="#fff" /></svg>
          <svg width="16" height="14"><path d="M2 5h3l4-4v12L5 9H2z" fill="#f2f4f8" /><path d="M11 4c2 2 2 4 0 6M13 2c3 3 3 7 0 10" fill="none" stroke="#cdd5e4" /></svg>
          <svg width="14" height="14"><path d="M1 12v-2M4 12V8M7 12V6M10 12V4M13 12V2" stroke="#eef1f7" strokeWidth="2" /></svg>
          <svg width="15" height="14"><path d="M3 1v12" stroke="#fff" strokeWidth="1.5" /><path d="M4 2h8v6H4z" fill="#dfe4ee" /><circle cx="10" cy="9" r="4" fill="#d42c30" /><path d="m8 7 4 4m0-4-4 4" stroke="#fff" /></svg>
          <Clock>7:57<br />2021/03/14</Clock>
          <ShowDesktop aria-label="デスクトップの表示" />
        </Tray>
      </Taskbar>
    </Shell>
  );
}
